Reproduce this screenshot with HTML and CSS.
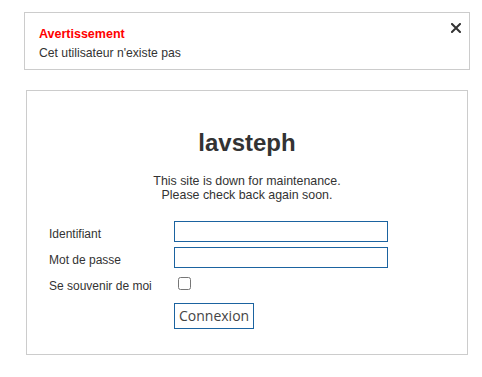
FILE: index.html
```html
<!DOCTYPE html>
<html lang="fr">
<head>
<meta charset="utf-8">
<title>lavsteph</title>
<link rel="stylesheet" href="styles.css">
</head>
<body>
<div class="page">
  <div class="alert">
    <div class="alert-title">Avertissement</div>
    <div class="alert-text">Cet utilisateur n'existe pas</div>
    <button class="alert-close" type="button" aria-label="Fermer">
      <svg width="10" height="10" viewBox="0 0 10 10"><path d="M1 1L9 9M9 1L1 9" stroke="#333" stroke-width="2" stroke-linecap="square" fill="none"/></svg>
    </button>
  </div>
  <div class="panel">
    <h1 class="site-title">lavsteph</h1>
    <p class="notice">This site is down for maintenance.<br>Please check back again soon.</p>
    <form class="login">
      <label class="lbl" for="user">Identifiant</label>
      <input class="field" id="user" type="text">
      <label class="lbl" for="pass">Mot de passe</label>
      <input class="field" id="pass" type="password">
      <label class="lbl" for="remember">Se souvenir de moi</label>
      <div class="check-cell"><input class="check" id="remember" type="checkbox"></div>
      <div></div>
      <div><button class="submit" type="button">Connexion</button></div>
    </form>
  </div>
</div>
</body>
</html>
```

FILE: styles.css
```css
html, body {
  margin: 0;
  padding: 0;
  background: #fff;
}
body {
  font-family: "Liberation Sans", Arial, sans-serif;
  color: #333;
  font-size: 12px;
}
.page {
  padding: 12px 0 0 24px;
}
.alert {
  position: relative;
  box-sizing: border-box;
  width: 446px;
  height: 58px;
  border: 1px solid #ccc;
  padding: 14px 15px 0 14px;
}
.alert-title {
  color: #f00;
  font-weight: bold;
  font-size: 12.5px;
  line-height: 14px;
}
.alert-text {
  margin-top: 5px;
  font-size: 12.2px;
  line-height: 14px;
}
.alert-close {
  position: absolute;
  top: 10px;
  right: 8px;
  width: 10px;
  height: 10px;
  padding: 0;
  border: 0;
  background: none;
  display: block;
}
.alert-close svg {
  display: block;
}
.panel {
  box-sizing: border-box;
  width: 442px;
  height: 265px;
  margin: 20px 0 0 2px;
  border: 1px solid #ccc;
  padding: 38px 0 0 22px;
}
.site-title {
  margin: 0;
  padding-right: 22px;
  text-align: center;
  font-size: 24px;
  line-height: 28px;
  font-weight: bold;
}
.notice {
  margin: 17px 0 0;
  padding-right: 22px;
  text-align: center;
  font-size: 12.4px;
  line-height: 14px;
}
.login {
  margin-top: 19px;
  display: grid;
  grid-template-columns: 125px 214px;
  grid-template-rows: 21px 21px 25px 26px;
  row-gap: 5px;
  align-items: start;
}
.lbl {
  padding-top: 6px;
  line-height: 14px;
}
.field {
  box-sizing: border-box;
  width: 214px;
  height: 21px;
  margin: 0;
  border: 1px solid #1b63a0;
  padding: 1px 3px;
  font-size: 13px;
  outline: none;
}
.check-cell {
  padding-top: 1px;
}
.check {
  margin: 3px 3px 3px 4px;
  width: 13px;
  height: 13px;
}
.submit {
  box-sizing: border-box;
  height: 26px;
  margin: 0;
  padding: 0 4px;
  border: 1px solid #1b63a0;
  background: #fff;
  color: #444;
  font-family: "Open Sans", "Noto Sans", sans-serif;
  font-size: 14px;
  line-height: 18px;
}
```
